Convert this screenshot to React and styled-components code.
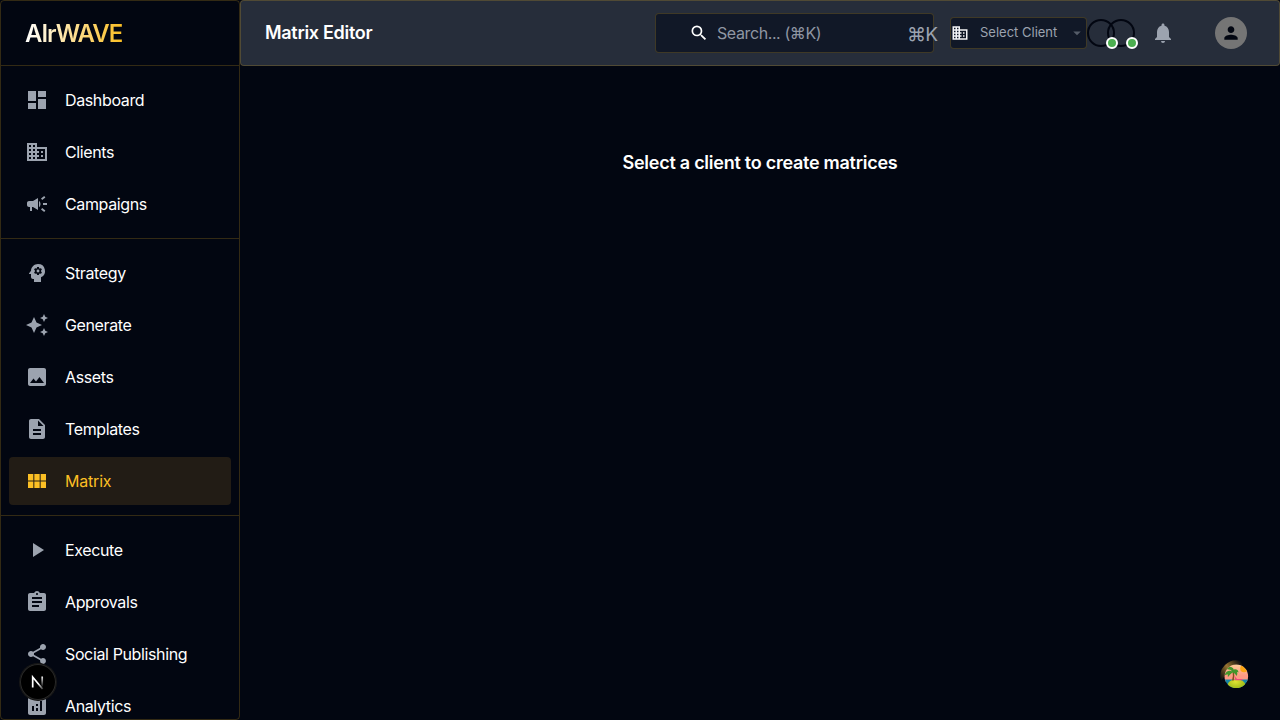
import React from "react";
import styled, { createGlobalStyle, css } from "styled-components";
import {
  MdDashboard, MdBusiness, MdCampaign, MdPsychology, MdAutoAwesome, MdImage,
  MdDescription, MdViewModule, MdPlayArrow, MdAssignment, MdShare, MdAnalytics,
  MdSearch, MdNotifications, MdPerson, MdArrowDropDown,
} from "react-icons/md";

const line = "rgba(251, 191, 36, 0.2)";
const ink = "#020611";

const GlobalStyle = createGlobalStyle`
  *, *::before, *::after { box-sizing: border-box; }
  body {
    margin: 0;
    background: ${ink};
    color: #fff;
    font-family: Inter, "DejaVu Sans", sans-serif;
    overflow: hidden;
  }
`;

const Shell = styled.div`
  display: grid;
  grid-template-columns: 240px 1fr;
  height: 100vh;
`;

const Sidebar = styled.aside`
  height: 100vh;
  overflow: hidden;
  border: 1px solid ${line};
  border-radius: 4px;
`;

const Brand = styled.div`
  display: flex;
  align-items: center;
  height: 65px;
  padding: 2px 24px 0;
  border-bottom: 1px solid ${line};
`;

const Logo = styled.span`
  font-size: 24px;
  line-height: 32px;
  font-weight: 600;
  letter-spacing: -1px;
  background: linear-gradient(90deg, #fff 0%, #fbbf24 100%);
  background-clip: text;
  color: transparent;
`;

const NavGroup = styled.nav`
  display: flex;
  flex-direction: column;
  gap: 4px;
  padding: 10px 8px;
  & + & { border-top: 1px solid ${line}; }
`;

const NavItem = styled.a`
  display: flex;
  flex: none;
  align-items: center;
  gap: 16px;
  height: 48px;
  padding: 0 16px;
  border-radius: 4px;
  font-size: 16px;
  line-height: 24px;
  letter-spacing: ${(p) => (p.$active ? -0.2 : -0.37)}px;
  white-space: nowrap;
  svg { width: 24px; height: 24px; color: #9ca3af; }
  ${(p) => p.$active && css`
    background: #221c15;
    color: #fbbf24;
    svg { color: #fbbf24; }
  `}
`;

const Main = styled.main`
  display: flex;
  flex-direction: column;
  min-width: 0;
`;

const Header = styled.header`
  display: flex;
  align-items: center;
  height: 66px;
  padding: 0 32px 0 24px;
  background: #262d3a;
  border: 1px solid ${line};
  border-radius: 4px;
`;

const Title = styled.h1`
  flex: 1;
  margin: 0;
  font-size: 18px;
  line-height: 28px;
  font-weight: 600;
  letter-spacing: -0.3px;
`;

const Search = styled.div`
  display: flex;
  align-items: center;
  flex: none;
  width: 279px;
  height: 40px;
  margin-right: 16px;
  padding-left: 33px;
  background: #111827;
  border: 1px solid ${line};
  border-radius: 4px;
  svg { flex: none; width: 20px; height: 20px; }
`;

const Placeholder = styled.span`
  flex: none;
  width: 190px;
  margin-left: 8px;
  color: #8f96a3;
  font-size: 16px;
  letter-spacing: -0.4px;
  white-space: nowrap;
`;

const Shortcut = styled.span`
  flex: none;
  padding-top: 4px;
  color: #9ca3af;
  font-size: 19px;
  line-height: 24px;
  letter-spacing: -0.7px;
  white-space: nowrap;
`;

const ClientSelect = styled.div`
  display: flex;
  align-items: center;
  flex: none;
  width: 137px;
  height: 32px;
  background: #111827;
  border: 1px solid ${line};
  border-radius: 4px;
  font-size: 13px;
  letter-spacing: 0;
  color: #9ca3af;
  white-space: nowrap;
  svg { flex: none; width: 18px; height: 18px; color: #f3f4f6; }
  svg:last-child { width: 18px; height: 18px; margin-left: auto; color: #555c69; }
  span { margin-left: 11px; padding-bottom: 2px; }
`;

const Presence = styled.div`
  display: flex;
  flex: none;
  width: 48px;
`;

const Person = styled.div`
  position: relative;
  flex: none;
  width: 28px;
  height: 28px;
  border: 2px solid ${ink};
  border-radius: 50%;
  & + & { margin-left: -8px; }
  &::after {
    content: "";
    position: absolute;
    z-index: 1;
    right: -5px;
    bottom: -4px;
    width: 12px;
    height: 12px;
    border: 2px solid #fff;
    border-radius: 50%;
    background: #4caf50;
  }
`;

const Bell = styled.div`
  display: flex;
  margin: 0 40px 0 16px;
  color: #9ca3af;
`;

const Avatar = styled.div`
  display: grid;
  place-items: center;
  width: 32px;
  height: 32px;
  border-radius: 50%;
  background: #757575;
  color: ${ink};
`;

const EmptyTitle = styled.h2`
  margin: 82px 0 0;
  text-align: center;
  font-size: 18px;
  line-height: 29px;
  font-weight: 600;
  letter-spacing: -0.26px;
`;

const DevBadge = styled.div`
  position: fixed;
  left: 20px;
  bottom: 20px;
  display: grid;
  place-items: center;
  width: 36px;
  height: 36px;
  border-radius: 50%;
  background: #000;
  box-shadow: inset 0 0 0 1px #292929, 0 0 0 1px #171717;
`;

const IslandButton = styled.div`
  position: fixed;
  right: 24px;
  bottom: 24px;
  width: 40px;
  height: 40px;
`;

const groups = [
  [
    ["Dashboard", MdDashboard],
    ["Clients", MdBusiness],
    ["Campaigns", MdCampaign],
  ],
  [
    ["Strategy", MdPsychology],
    ["Generate", MdAutoAwesome],
    ["Assets", MdImage],
    ["Templates", MdDescription],
    ["Matrix", MdViewModule],
  ],
  [
    ["Execute", MdPlayArrow],
    ["Approvals", MdAssignment],
    ["Social Publishing", MdShare],
    ["Analytics", MdAnalytics],
  ],
];

const NextMark = () => (
  <svg width="16" height="16" viewBox="0 0 16 16" fill="none">
    <defs>
      <linearGradient id="stem" x1="0" y1="2" x2="0" y2="12" gradientUnits="userSpaceOnUse">
        <stop stopColor="#fff" />
        <stop offset="1" stopColor="#fff" stopOpacity="0.1" />
      </linearGradient>
      <linearGradient id="slash" x1="9" y1="9" x2="14" y2="15" gradientUnits="userSpaceOnUse">
        <stop stopColor="#fff" />
        <stop offset="1" stopColor="#fff" stopOpacity="0.15" />
      </linearGradient>
    </defs>
    <path d="M2.700 13.500V3L12.600 15" stroke="url(#slash)" strokeWidth="1.700" />
    <path d="M12.200 2.500v10" stroke="url(#stem)" strokeWidth="1.700" />
  </svg>
);

const Island = () => (
  <svg width="40" height="40" viewBox="0 0 40 40">
    <defs>
      <linearGradient id="sky" x1="0" y1="0" x2="0" y2="1">
        <stop stopColor="#ffd09a" />
        <stop offset="0.65" stopColor="#ff9a83" />
      </linearGradient>
      <linearGradient id="halo" x1="4" y1="24" x2="26" y2="6" gradientUnits="userSpaceOnUse">
        <stop stopColor="#8a681c" stopOpacity="0" />
        <stop offset="0.5" stopColor="#987433" />
        <stop offset="1" stopColor="#8a681c" stopOpacity="0" />
      </linearGradient>
      <radialGradient id="sand" cx="0.45" cy="0.2" r="0.7">
        <stop stopColor="#dfe331" />
        <stop offset="1" stopColor="#8daf14" />
      </radialGradient>
      <clipPath id="disc"><circle cx="20.3" cy="20.3" r="11.8" /></clipPath>
    </defs>
    <path d="M5 25A16 16 0 0 1 25 5L27 10A13 13 0 0 0 8 21Z" fill="url(#halo)" />
    <g clipPath="url(#disc)">
      <rect x="8" y="8" width="25" height="18" fill="url(#sky)" />
      <circle cx="28" cy="12.5" r="3.8" fill="#fba514" />
      <rect x="8" y="23.5" width="25" height="10" fill="#1685a5" />
      <ellipse cx="20.5" cy="29.5" rx="9" ry="6.3" fill="url(#sand)" />
      <path d="M16.500 15q1 5-.5 9.500h1.800q1-5 0-9.500Z" fill="#8a4b20" />
      <path d="M16.500 15.500C13 14 10 15 8.500 19.500q2-1.500 3.500-1-.5 1.500 0 2.500 2-3 4.500-4.500 3 .5 4 3.500 1.500-2 .5-4 1 0 1.500.500-.5-4-5-3 0-2-3-2.500-4-.5-5 2.500 4-1 7 2Z" fill="#43962b" />
      <path d="M19 20.500l2 2.500h5l1 1.300h-8Z" fill="#ee4c7c" />
    </g>
  </svg>
);

export default function App() {
  return (
    <Shell>
      <GlobalStyle />
      <Sidebar>
        <Brand><Logo>AIrWAVE</Logo></Brand>
        {groups.map((items, i) => (
          <NavGroup key={i}>
            {items.map(([label, Icon]) => (
              <NavItem key={label} $active={label === "Matrix"}>
                <Icon />
                {label}
              </NavItem>
            ))}
          </NavGroup>
        ))}
      </Sidebar>
      <Main>
        <Header>
          <Title>Matrix Editor</Title>
          <Search>
            <MdSearch />
            <Placeholder>Search... (⌘K)</Placeholder>
            <Shortcut>⌘K</Shortcut>
          </Search>
          <ClientSelect>
            <MdBusiness />
            <span>Select Client</span>
            <MdArrowDropDown />
          </ClientSelect>
          <Presence>
            <Person />
            <Person />
          </Presence>
          <Bell><MdNotifications size={24} /></Bell>
          <Avatar><MdPerson size={20} /></Avatar>
        </Header>
        <EmptyTitle>Select a client to create matrices</EmptyTitle>
      </Main>
      <DevBadge><NextMark /></DevBadge>
      <IslandButton><Island /></IslandButton>
    </Shell>
  );
}
